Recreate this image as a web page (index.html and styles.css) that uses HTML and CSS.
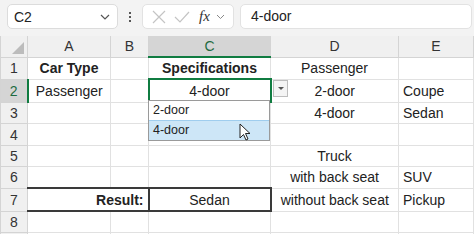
FILE: index.html
```html
<!DOCTYPE html>
<html lang="en">
<head>
    <meta charset="UTF-8">
    <title>Dependent dropdown</title>
    <link rel="stylesheet" href="styles.css">
</head>
<body>
    <div class="toolbar">
        <div class="name-box">
            <span>C2</span>
            <svg class="chev" width="10" height="6" viewBox="0 0 10 6"><path d="M1 1l4 4 4-4" fill="none" stroke="#555" stroke-width="1.2"/></svg>
        </div>
        <div class="dots"><i></i><i></i><i></i></div>
        <div class="fx-box">
            <svg width="16" height="16" viewBox="0 0 16 16"><path d="M2 2l12 12M14 2L2 14" stroke="#c4c4c4" stroke-width="1.2"/></svg>
            <svg width="18" height="16" viewBox="0 0 18 16"><path d="M2 8l5 5 9-10" fill="none" stroke="#c4c4c4" stroke-width="1.2"/></svg>
            <span class="fx">fx</span>
            <svg width="9" height="6" viewBox="0 0 9 6"><path d="M1 1l3.5 3.5L8 1" fill="none" stroke="#888" stroke-width="1"/></svg>
        </div>
        <div class="formula">4-door</div>
    </div>

    <div class="sheet">
        <table class="grid">
            <colgroup>
                <col style="width:27px"><col style="width:83px"><col style="width:38px"><col style="width:122px"><col style="width:128px"><col>
            </colgroup>
            <tr class="head">
                <th class="corner"><span class="tri"></span></th>
                <th>A</th><th>B</th><th class="sel-col">C</th><th>D</th><th>E</th>
            </tr>
            <tr>
                <th class="rn">1</th>
                <td class="c b">Car Type</td><td></td><td class="c b">Specifications</td><td class="c">Passenger</td><td></td>
            </tr>
            <tr class="tall">
                <th class="rn sel-row">2</th>
                <td class="c">Passenger</td><td></td><td class="c active">4-door</td><td class="c">2-door</td><td>Coupe</td>
            </tr>
            <tr>
                <th class="rn">3</th>
                <td></td><td></td><td></td><td class="c">4-door</td><td>Sedan</td>
            </tr>
            <tr class="tall">
                <th class="rn">4</th>
                <td></td><td></td><td></td><td></td><td></td>
            </tr>
            <tr>
                <th class="rn">5</th>
                <td></td><td></td><td></td><td class="c">Truck</td><td></td>
            </tr>
            <tr>
                <th class="rn">6</th>
                <td></td><td></td><td></td><td class="c">with back seat</td><td>SUV</td>
            </tr>
            <tr class="tall result">
                <th class="rn">7</th>
                <td colspan="2" class="r b boxed">Result:</td><td class="c boxed">Sedan</td><td class="c">without back seat</td><td>Pickup</td>
            </tr>
            <tr>
                <th class="rn">8</th>
                <td></td><td></td><td></td><td></td><td></td>
            </tr>
            <tr>
                <th class="rn"></th>
                <td></td><td></td><td></td><td></td><td></td>
            </tr>
        </table>

        <div class="drop-btn"><span></span></div>
        <ul class="drop-list">
            <li>2-door</li>
            <li class="hover">4-door</li>
        </ul>
        <svg class="cursor" width="12" height="18" viewBox="0 0 12 18">
            <path d="M1 1v14l3.5-3.5 2.5 5.5 2-1-2.5-5.5H11z" fill="#fff" stroke="#222" stroke-width="1"/>
        </svg>
    </div>
</body>
</html>
```

FILE: styles.css
```css
body {
    margin: 0;
    width: 474px;
    height: 234px;
    overflow: hidden;
    background: #fff;
    font-family: "Liberation Sans", Arial, sans-serif;
    font-size: 14px;
    color: #222;
}

/* formula bar */
.toolbar {
    height: 36px;
    background: #f3f3f3;
    display: flex;
    align-items: flex-start;
    padding: 4px 2px 0 7px;
    box-sizing: border-box;
}

.name-box {
    width: 111px;
    height: 25px;
    box-sizing: border-box;
    background: #fff;
    border: 1px solid #dcdcdc;
    border-radius: 5px;
    display: flex;
    align-items: center;
    justify-content: space-between;
    padding: 0 7px 0 6px;
    font-size: 14px;
}

.dots {
    width: 24px;
    height: 25px;
    display: flex;
    flex-direction: column;
    align-items: center;
    justify-content: center;
    gap: 2px;
}

.dots i {
    width: 2px;
    height: 2px;
    background: #555;
}

.fx-box {
    width: 92px;
    height: 25px;
    box-sizing: border-box;
    background: #fff;
    border: 1px solid #e2e2e2;
    border-radius: 5px;
    display: flex;
    align-items: center;
    gap: 6px;
    padding: 0 4px 0 8px;
}

.fx {
    font-family: "Liberation Serif", serif;
    font-style: italic;
    font-size: 15px;
    color: #333;
    margin-left: 2px;
}

.formula {
    flex: 1;
    height: 25px;
    box-sizing: border-box;
    margin-left: 6px;
    background: #fff;
    border: 1px solid #e2e2e2;
    border-radius: 5px;
    padding: 3px 0 0 10px;
}

/* sheet grid */
.sheet {
    position: relative;
}

.grid {
    border-collapse: collapse;
    table-layout: fixed;
    width: 474px;
}

.grid td,
.grid th {
    border: 1px solid #e1e1e1;
    padding: 0 4px;
    height: 20px;
    white-space: nowrap;
    overflow: visible;
    font-weight: normal;
}

.grid tr.tall td,
.grid tr.tall th {
    height: 21px;
}

.grid th {
    background: #f0f0f0;
    border-color: #d4d4d4;
    color: #333;
    text-align: center;
    padding: 0;
}

.grid .head th {
    height: 20px;
    border-top: none;
}

.grid .corner {
    position: relative;
}

.tri {
    position: absolute;
    right: 3px;
    bottom: 3px;
    width: 0;
    height: 0;
    border-left: 12px solid transparent;
    border-bottom: 12px solid #bcbcbc;
}

.grid .sel-col {
    background: #d5d5d5;
    color: #1e6b41;
    border-bottom: 2px solid #107c41;
}

.grid .sel-row {
    background: #d5d5d5;
    color: #1e6b41;
    border-right: 2px solid #107c41;
}

.grid .c { text-align: center; }
.grid .r { text-align: right; }
.grid .b { font-weight: bold; }

.grid td.active {
    border: 2px solid #107c41;
}

.grid td.boxed {
    border: 2px solid #3a3a3a;
}

.grid tr.result td:first-of-type {
    border-left-width: 1px;
}

/* data validation dropdown */
.drop-btn {
    position: absolute;
    left: 273px;
    top: 44px;
    width: 15px;
    height: 17px;
    box-sizing: border-box;
    background: #f4f4f4;
    border: 1px solid #bdbdbd;
    display: flex;
    align-items: center;
    justify-content: center;
}

.drop-btn span {
    width: 0;
    height: 0;
    border-left: 3px solid transparent;
    border-right: 3px solid transparent;
    border-top: 3px solid #555;
}

.drop-list {
    position: absolute;
    left: 148px;
    top: 64px;
    width: 122px;
    margin: 0;
    padding: 0;
    list-style: none;
    background: #fff;
    border: 1px solid #9a9a9a;
    box-sizing: border-box;
    font-size: 12.5px;
}

.drop-list li {
    height: 19px;
    line-height: 19px;
    padding-left: 4px;
}

.drop-list li.hover {
    background: #cde6f7;
    border-top: 1px solid #9fcdee;
}

.cursor {
    position: absolute;
    left: 239px;
    top: 87px;
}
```
